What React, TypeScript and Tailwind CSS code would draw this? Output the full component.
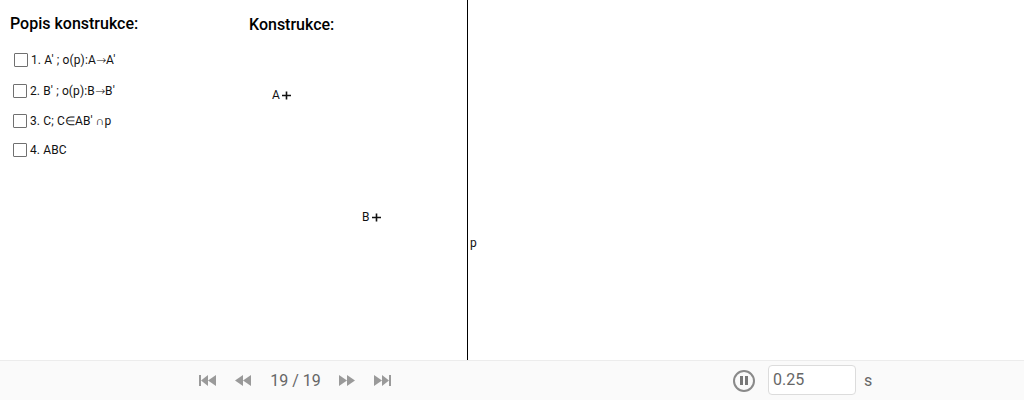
import React from 'react'

const Sym = ({ children }: { children: React.ReactNode }) => (
  <span className="font-['DejaVu_Sans',sans-serif] text-[12px] leading-[14px] font-extralight">{children}</span>
)

const steps = [
  {
    id: 1,
    label: <>1. A′ ; o(p):A<Sym>→</Sym>A′</>,
    box: 'left-[14px] top-[53px]',
    text: 'left-[31px] top-[53px]',
  },
  {
    id: 2,
    label: <>2. B′ ; o(p):B<Sym>→</Sym>B′</>,
    box: 'left-[13px] top-[84px]',
    text: 'left-[30px] top-[84px]',
  },
  {
    id: 3,
    label: <>3. C; C<Sym>∈</Sym>AB′ <Sym>∩</Sym>p</>,
    box: 'left-[13px] top-[114px]',
    text: 'left-[30px] top-[114px]',
  },
  {
    id: 4,
    label: <>4. ABC</>,
    box: 'left-[13px] top-[143px]',
    text: 'left-[30px] top-[143px]',
  },
]

const Cross = () => (
  <svg width="9" height="9" viewBox="0 0 9 9" className="block">
    <path d="M0 4.5H9M4.5 0.5V8.5" stroke="#111" strokeWidth="1.6" />
  </svg>
)

const SkipIcon = ({ flip = false }: { flip?: boolean }) => (
  <svg width="17" height="11" viewBox="0 0 17 11" className={flip ? 'block rotate-180' : 'block'}>
    <path d="M0 0H2V11H0ZM2 5.5L9 0V11ZM9 5.5L17 0V11Z" fill="#9a9a9a" />
  </svg>
)

const StepIcon = ({ flip = false }: { flip?: boolean }) => (
  <svg width="16" height="11" viewBox="0 0 16 11" className={flip ? 'block rotate-180' : 'block'}>
    <path d="M0 5.5L8 0V11ZM8 5.5L16 0V11Z" fill="#9a9a9a" />
  </svg>
)

export default function App() {
  return (
    <div className="w-[1024px] h-[400px] overflow-hidden bg-white font-['Roboto',sans-serif] flex flex-col">
      {/* Drawing area */}
      <div className="relative h-[360px] shrink-0">
        <h2 className="absolute left-[10px] top-[14px] text-[16px] leading-[20px] font-medium text-black">
          Popis konstrukce:
        </h2>
        <h2 className="absolute left-[249px] top-[15px] text-[16px] leading-[20px] font-medium text-black">
          Konstrukce:
        </h2>

        {steps.map((step) => (
          <React.Fragment key={step.id}>
            <div className={`absolute w-[14px] h-[14px] border-[1.5px] border-[#707070] rounded-[1px] ${step.box}`} />
            <span className={`absolute text-[12px] leading-[14px] tracking-[0.12px] text-[#111] whitespace-pre ${step.text}`}>
              {step.label}
            </span>
          </React.Fragment>
        ))}

        <span className="absolute left-[272px] top-[88px] text-[12px] leading-[14px] text-[#111]">A</span>
        <div className="absolute left-[282px] top-[91px]">
          <Cross />
        </div>
        <span className="absolute left-[362px] top-[210px] text-[12px] leading-[14px] text-[#111]">B</span>
        <div className="absolute left-[372px] top-[213px]">
          <Cross />
        </div>

        <div className="absolute left-[467px] top-0 h-[360px] w-px bg-black" />
        <span className="absolute left-[470px] top-[236px] text-[12px] leading-[14px] text-[#111]">p</span>
      </div>

      {/* Playback bar */}
      <div className="h-[40px] border-t border-[#ececec] bg-[#fafafa] bg-[radial-gradient(#eeeeee_0.6px,transparent_0.7px)] bg-[length:6px_6px] flex items-center text-[#666]">
        <div className="ml-[199px] flex items-center">
          <SkipIcon />
          <div className="ml-[19px]">
            <StepIcon />
          </div>
          <span className="ml-[19px] w-[51px] text-center text-[16px] leading-[20px] text-[#666] whitespace-pre">
            19 / 19
          </span>
          <div className="ml-[18px]">
            <StepIcon flip />
          </div>
          <div className="ml-[19px]">
            <SkipIcon flip />
          </div>
        </div>
        <div className="ml-[342px] w-[22px] h-[22px] rounded-full border-2 border-[#8a8a8a] flex items-center justify-center gap-[2px]">
          <div className="w-[3px] h-[9px] bg-[#777]" />
          <div className="w-[3px] h-[9px] bg-[#777]" />
        </div>
        <div className="ml-[13px] mb-[2px] w-[88px] h-[30px] rounded-[4px] border border-[#dcdcdc] bg-white pl-[4px] flex items-center text-[16px] text-[#666]">
          0.25
        </div>
        <span className="ml-[8px] text-[16px] text-[#666]">s</span>
      </div>
    </div>
  )
}
